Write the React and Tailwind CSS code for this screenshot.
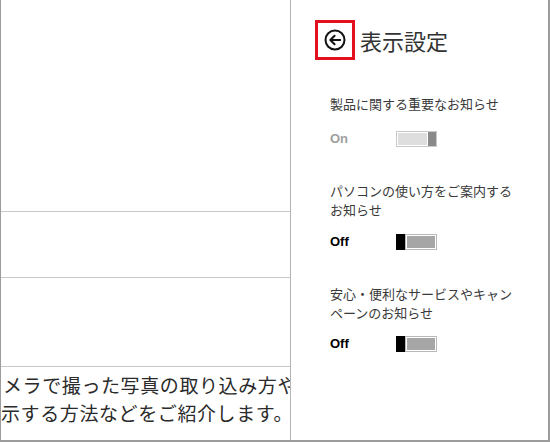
import React from 'react';

const jp = { fontFamily: '"Noto Sans CJK JP", "Noto Sans", sans-serif' };
const latin = { fontFamily: '"Liberation Sans", Arial, sans-serif' };

const Toggle = ({ on }) => {
  if (on) {
    return (
      <div className="flex h-[16px] w-[41px] border border-[#c8c8c8] bg-white">
        <div className="m-px flex-1 bg-[#dedede]" />
        <div className="w-[8px] bg-[#8a8a8a]" />
      </div>
    );
  }
  return (
    <div className="flex h-[16px] w-[41px]">
      <div className="w-[9px] bg-black" />
      <div className="flex flex-1 border border-[#b8b8b8] bg-white p-px">
        <div className="flex-1 bg-[#a6a6a6]" />
      </div>
    </div>
  );
};

const Setting = ({ lines, on, className }) => (
  <div className={className}>
    <div className="text-[13px] leading-[19px] text-[#3a3a3a]" style={jp}>
      {lines.map((l) => (
        <div key={l}>{l}</div>
      ))}
    </div>
    <div className="flex items-center">
      <span
        className={`w-[66px] text-[13px] font-bold leading-[16px] ${on ? 'text-[#a0a0a0]' : 'text-black'}`}
        style={latin}
      >
        {on ? 'On' : 'Off'}
      </span>
      <Toggle on={on} />
    </div>
  </div>
);

const BackIcon = () => (
  <svg width="22" height="22" viewBox="0 0 22 22" fill="none" stroke="#111" strokeWidth="2">
    <circle cx="11" cy="11" r="9.5" />
    <path d="M16.2 11H6.5M10.6 6.7L6.3 11l4.3 4.3" strokeLinecap="round" strokeLinejoin="round" />
  </svg>
);

export default function App() {
  return (
    <div className="flex h-[442px] w-[550px] overflow-hidden border-b-2 border-l border-r-2 border-[#9c9c9c] bg-white">
      {/* left page (scrolled content, clipped by the charm) */}
      <div className="flex w-[290px] shrink-0 flex-col border-r border-[#b4b4b4]">
        <div className="h-[212px] border-b border-[#c8c8c8]" />
        <div className="h-[66px] border-b border-[#c8c8c8]" />
        <div className="h-[89px] border-b border-[#c8c8c8]" />
        <div
          className="overflow-hidden whitespace-nowrap pt-[4px] text-[19px] leading-[28px] tracking-[0.6px] text-[#2a2a2a]"
          style={jp}
        >
          <div className="pl-[2px]">メラで撮った写真の取り込み方や</div>
          <div>示する方法などをご紹介します。</div>
        </div>
      </div>

      {/* settings charm */}
      <div className="flex-1 pl-[24px]">
        <div className="mt-[20px] flex items-center">
          <div className="flex h-[40px] w-[40px] items-center justify-center border-[3px] border-[#e3101e]">
            <BackIcon />
          </div>
          <h1 className="ml-[5px] text-[22px] leading-[30px] text-[#333]" style={jp}>
            表示設定
          </h1>
        </div>

        <div className="pl-[15px]">
          <Setting className="mt-[34px] flex flex-col gap-[18px]" lines={['製品に関する重要なお知らせ']} on />
          <Setting
            className="mt-[34px] flex flex-col gap-[15px]"
            lines={['パソコンの使い方をご案内する', 'お知らせ']}
          />
          <Setting
            className="mt-[34px] flex flex-col gap-[14px]"
            lines={['安心・便利なサービスやキャン', 'ペーンのお知らせ']}
          />
        </div>
      </div>
    </div>
  );
}
